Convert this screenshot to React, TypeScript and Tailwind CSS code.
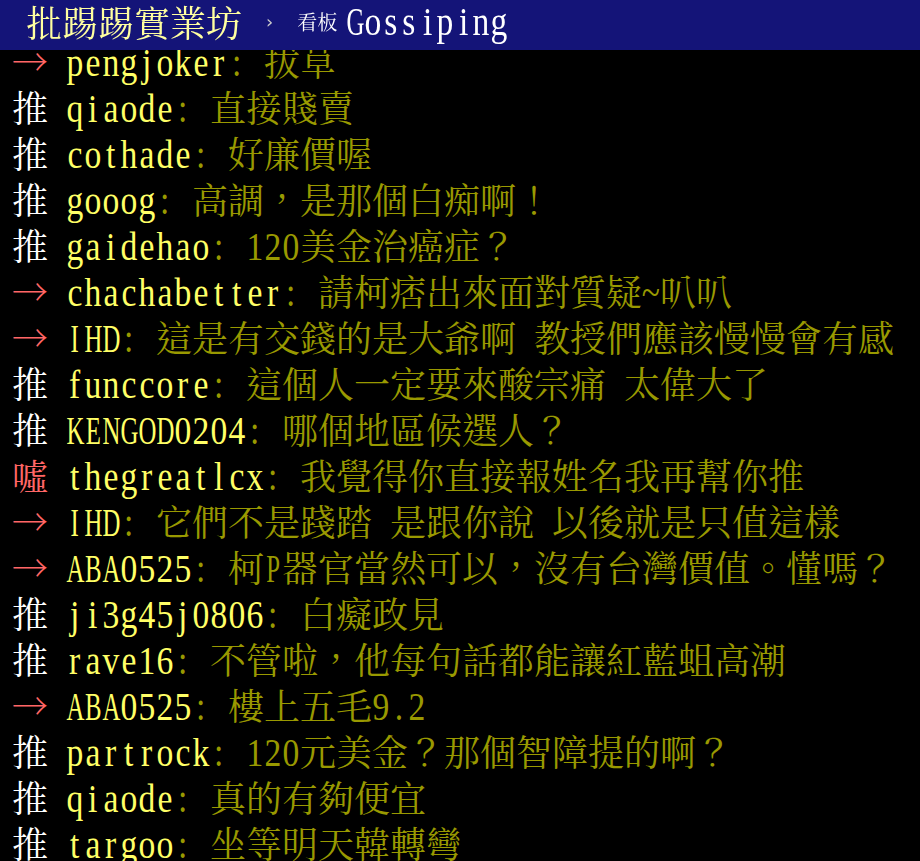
import React from "react";

type Row = [string, string, string];

const rows: Row[] = [
  ["→", "pengjoker", "拔草"],
  ["推", "qiaode", "直接賤賣"],
  ["推", "cothade", "好廉價喔"],
  ["推", "gooog", "高調，是那個白痴啊！"],
  ["推", "gaidehao", "120美金治癌症？"],
  ["→", "chachabetter", "請柯痞出來面對質疑~叭叭"],
  ["→", "IHD", "這是有交錢的是大爺啊 教授們應該慢慢會有感"],
  ["推", "funccore", "這個人一定要來酸宗痛 太偉大了"],
  ["推", "KENGOD0204", "哪個地區候選人？"],
  ["噓", "thegreatlcx", "我覺得你直接報姓名我再幫你推"],
  ["→", "IHD", "它們不是踐踏 是跟你說 以後就是只值這樣"],
  ["→", "ABA0525", "柯P器官當然可以，沒有台灣價值。懂嗎？"],
  ["推", "ji3g45j0806", "白癡政見"],
  ["推", "rave16", "不管啦，他每句話都能讓紅藍蛆高潮"],
  ["→", "ABA0525", "樓上五毛9.2"],
  ["推", "partrock", "120元美金？那個智障提的啊？"],
  ["推", "qiaode", "真的有夠便宜"],
  ["推", "targoo", "坐等明天韓轉彎"],
];

function isFull(ch: string): boolean {
  const c = ch.codePointAt(0) || 0;
  return c >= 0x2e80 || c === 0x2192;
}

function Char({ ch }: { ch: string }) {
  if (ch === " ") {
    return <span className="inline-block w-[18px]">{"\u00a0"}</span>;
  }
  if (isFull(ch)) {
    return (
      <span className="inline-flex w-[36px] justify-center font-['Noto_Serif_CJK_TC','Noto_Sans_CJK_TC',serif] text-[36px]">
        {ch}
      </span>
    );
  }
  const wide = /[A-Zmw]/.test(ch);
  return (
    <span className="inline-flex w-[18px] justify-center">
      <span
        className={
          wide
            ? "inline-block font-['Liberation_Serif',serif] text-[40px] scale-x-[0.62]"
            : "inline-block font-['Liberation_Serif',serif] text-[40px] scale-x-[0.84]"
        }
      >
        {ch}
      </span>
    </span>
  );
}

function Cells({ text }: { text: string }) {
  return (
    <>
      {Array.from(text).map((ch, i) => (
        <Char key={i} ch={ch} />
      ))}
    </>
  );
}

export default function App() {
  return (
    <div lang="zh-TW" className="min-h-screen bg-black">
      <div className="fixed top-0 left-0 right-0 z-10 flex h-[50px] items-center bg-[#141478] pb-[6px] pl-[26px] leading-none whitespace-nowrap">
        <span className="text-[#ffffa0]">
          <Cells text="批踢踢實業坊" />
        </span>
        <span className="ml-[24px] mr-[24px] font-['DejaVu_Sans',sans-serif] text-[18px] text-[#cccccc]">
          ›
        </span>
        <span className="font-['Noto_Serif_CJK_TC','Noto_Sans_CJK_TC',serif] text-[20px] text-white">
          看板
        </span>
        <span className="ml-[9px] text-white">
          <Cells text="Gossiping" />
        </span>
      </div>
      <div className="pt-[38px] pl-[12px]">
        {rows.map(([tag, user, content], i) => (
          <div key={i} className="h-[46px] whitespace-nowrap leading-[46px]">
            <span className={tag === "推" ? "text-white" : "text-[#ff6666]"}>
              <Cells text={tag + " "} />
            </span>
            <span className="text-[#ffff66]">
              <Cells text={user} />
            </span>
            <span className="text-[#999900]">
              <Cells text={": " + content} />
            </span>
          </div>
        ))}
      </div>
    </div>
  );
}
